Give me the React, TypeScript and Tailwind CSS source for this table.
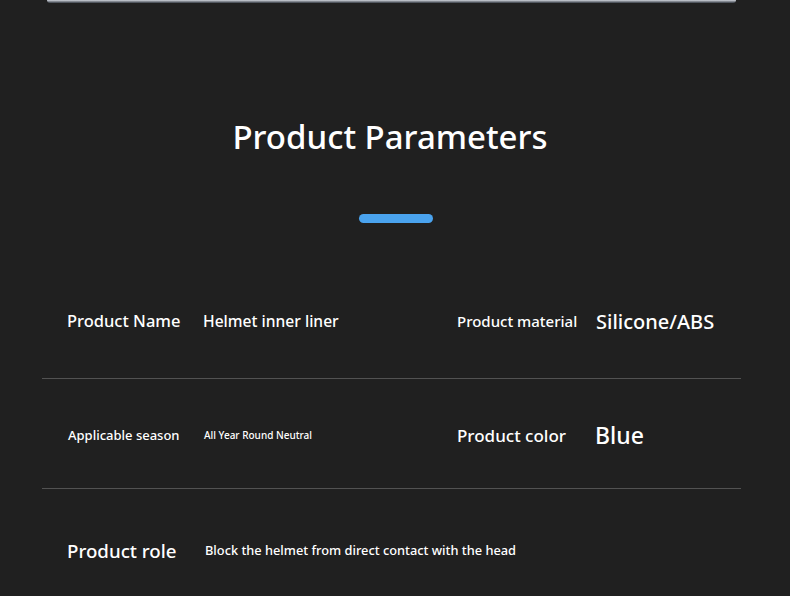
import React from "react";

const font = { fontFamily: '"Noto Sans", "Open Sans", sans-serif' };

type Cell = {
  label: string;
  value: string;
  labelClass: string;
  valueClass: string;
};

function ParamCell({ cell, labelWidth }: { cell: Cell; labelWidth: string }) {
  return (
    <div className="flex items-center">
      <div className={`${labelWidth} shrink-0 text-white ${cell.labelClass}`}>{cell.label}</div>
      <div className={`text-white ${cell.valueClass}`}>{cell.value}</div>
    </div>
  );
}

export default function App() {
  return (
    <div className="w-[790px] h-[596px] bg-[#202020] overflow-hidden font-medium" style={font}>
      {/* top strip of the previous section */}
      <div className="mx-[47px] w-[689px] h-[3px] rounded-b-sm bg-gradient-to-b from-[#d4d8e0] to-[#3a4048]" />

      <h1 className="mt-[114px] pr-[10px] text-center text-[33px] leading-[40px] text-white font-medium">
        Product Parameters
      </h1>
      <div className="mt-[57px] flex justify-center">
        <div className="ml-[1px] w-[74px] h-[9px] rounded-full bg-[#4aa3ee]" />
      </div>

      <div className="mt-[46px] mx-[42px] w-[699px]">
        {/* row 1 */}
        <div className="h-[110px] grid grid-cols-[390px_1fr] items-center border-b border-[#525252] pb-[4px]">
          <div className="pl-[25px]">
            <ParamCell
              labelWidth="w-[136px]"
              cell={{ label: "Product Name", value: "Helmet inner liner", labelClass: "text-[16.5px]", valueClass: "text-[15.6px]" }}
            />
          </div>
          <div className="pl-[25px]">
            <ParamCell
              labelWidth="w-[139px]"
              cell={{ label: "Product material", value: "Silicone/ABS", labelClass: "text-[15px]", valueClass: "text-[20px]" }}
            />
          </div>
        </div>

        {/* row 2 */}
        <div className="h-[110px] grid grid-cols-[390px_1fr] items-center border-b border-[#525252] pt-[4px]">
          <div className="pl-[26px]">
            <ParamCell
              labelWidth="w-[136px]"
              cell={{ label: "Applicable season", value: "All Year Round Neutral", labelClass: "text-[13px]", valueClass: "text-[10px]" }}
            />
          </div>
          <div className="pl-[25px]">
            <ParamCell
              labelWidth="w-[138px]"
              cell={{ label: "Product color", value: "Blue", labelClass: "text-[17px]", valueClass: "text-[23px]" }}
            />
          </div>
        </div>

        {/* row 3 */}
        <div className="h-[110px] flex items-center pt-[14px]">
          <div className="pl-[25px]">
            <ParamCell
              labelWidth="w-[138px]"
              cell={{ label: "Product role", value: "Block the helmet from direct contact with the head", labelClass: "text-[18.7px]", valueClass: "text-[12.8px]" }}
            />
          </div>
        </div>
      </div>
    </div>
  );
}
